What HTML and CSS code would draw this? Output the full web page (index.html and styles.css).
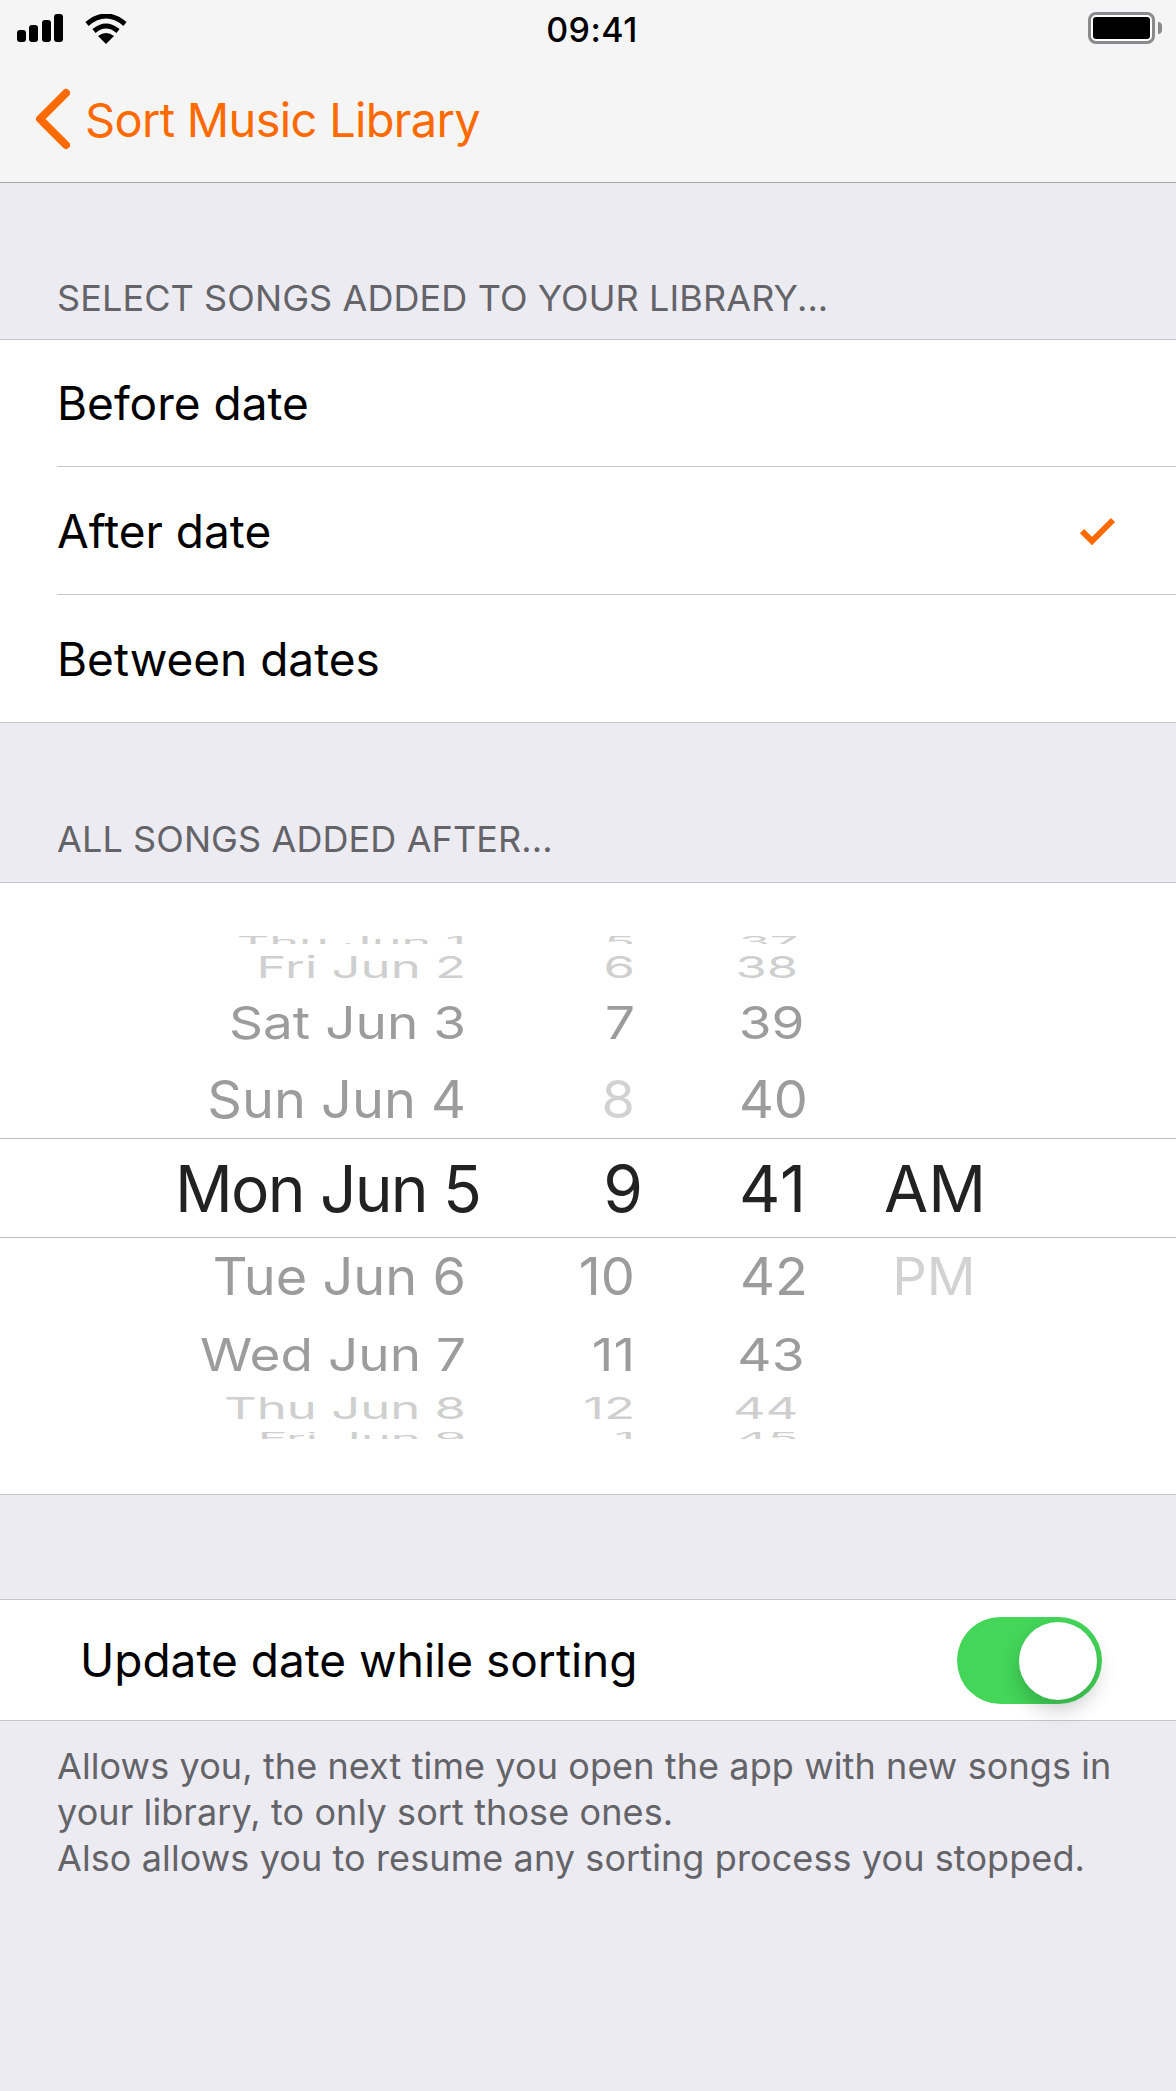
FILE: index.html
```html
<!DOCTYPE html>
<html>
<head>
<title>Sort Music Library</title>
<link rel="stylesheet" href="styles.css">
</head>
<body>
<div class="topbar">
    <div class="status">
        <div class="status-left">
            <svg class="signal" width="46" height="28" viewBox="0 0 46 28">
                <rect x="0" y="16" width="9" height="12" rx="3"/>
                <rect x="12" y="11" width="9" height="17" rx="3"/>
                <rect x="25" y="6" width="9" height="22" rx="3"/>
                <rect x="37" y="0" width="9" height="28" rx="3"/>
            </svg>
            <svg class="wifi" width="42" height="30" viewBox="0 0 42 30">
                <path d="M2 10 Q21 -6 40 10" fill="none" stroke="#000" stroke-width="5"/>
                <path d="M9 17 Q21 7 33 17" fill="none" stroke="#000" stroke-width="5"/>
                <path d="M13 22 Q21 16 29 22 L21 30 Z"/>
            </svg>
        </div>
        <div class="clock">09:41</div>
        <div class="battery">
            <div class="battery-body"><div class="battery-fill"></div></div>
            <div class="battery-tip"></div>
        </div>
    </div>
    <div class="nav">
        <svg class="back" width="38" height="62" viewBox="0 0 38 62">
            <path d="M34 5 L8 31 L34 57" fill="none" stroke="#ff6a00" stroke-width="8" stroke-linecap="round" stroke-linejoin="round"/>
        </svg>
        <span class="nav-title">Sort Music Library</span>
    </div>
</div>

<div class="section-head first">SELECT SONGS ADDED TO YOUR LIBRARY...</div>
<div class="list">
    <div class="row"><span>Before date</span></div>
    <div class="row"><span>After date</span>
        <svg class="check" width="36" height="28" viewBox="0 0 36 28">
            <path d="M2 14 L12 24 L33 3" fill="none" stroke="#ff6a00" stroke-width="6"/>
        </svg>
    </div>
    <div class="row"><span>Between dates</span></div>
</div>

<div class="section-head">ALL SONGS ADDED AFTER...</div>
<div class="picker">
    <div class="wheel">
        <div class="line clip-top far"><span class="d">Thu Jun 1</span><span class="h">5</span><span class="m">37</span><span class="p"></span></div>
        <div class="line r-fri far"><span class="d">Fri Jun 2</span><span class="h">6</span><span class="m">38</span><span class="p"></span></div>
        <div class="line r-sat"><span class="d">Sat Jun 3</span><span class="h">7</span><span class="m">39</span><span class="p"></span></div>
        <div class="line r-sun"><span class="d">Sun Jun 4</span><span class="h pale">8</span><span class="m">40</span><span class="p"></span></div>
        <div class="line current"><span class="d">Mon Jun 5</span><span class="h">9</span><span class="m">41</span><span class="p">AM</span></div>
        <div class="line r-tue"><span class="d">Tue Jun 6</span><span class="h">10</span><span class="m">42</span><span class="p pale">PM</span></div>
        <div class="line r-wed"><span class="d">Wed Jun 7</span><span class="h">11</span><span class="m">43</span><span class="p"></span></div>
        <div class="line r-thu far"><span class="d">Thu Jun 8</span><span class="h">12</span><span class="m">44</span><span class="p"></span></div>
        <div class="line clip-bottom far"><span class="d">Fri Jun 9</span><span class="h">1</span><span class="m">45</span><span class="p"></span></div>
    </div>
</div>

<div class="list switch-list">
    <div class="row switch-row"><span>Update date while sorting</span>
        <div class="switch"><div class="knob"></div></div>
    </div>
</div>
<div class="footnote">
    Allows you, the next time you open the app with new songs in<br>
    your library, to only sort those ones.<br>
    Also allows you to resume any sorting process you stopped.
</div>
</body>
</html>
```

FILE: styles.css
```css
* {
    box-sizing: border-box;
}

body {
    margin: 0;
    width: 1176px;
    height: 2091px;
    overflow: hidden;
    background-color: #ebebf1;
    font-family: Inter, "Liberation Sans", sans-serif;
    color: #000;
}

.topbar {
    height: 183px;
    background-color: #f5f5f6;
    border-bottom: 1px solid #a5a5a9;
}

.status {
    height: 56px;
    padding: 14px 14px 0 17px;
    display: flex;
    justify-content: space-between;
}

.status-left {
    display: flex;
    gap: 22px;
    align-items: flex-start;
}

.clock {
    font-size: 34px;
    font-weight: 500;
    line-height: 32px;
    letter-spacing: 0.5px;
    margin-right: 31px;
}

.battery {
    display: flex;
    align-items: center;
    height: 32px;
    margin-top: -2px;
}

.battery-body {
    width: 67px;
    height: 32px;
    border: 3px solid #8a8a8c;
    border-radius: 8px;
    padding: 2px;
    background-color: #fff;
}

.battery-fill {
    height: 100%;
    background-color: #000;
    border-radius: 3px;
}

.battery-tip {
    width: 4px;
    height: 12px;
    background-color: #8a8a8c;
    border-radius: 0 4px 4px 0;
    margin-left: 3px;
}

.signal, .wifi {
    display: block;
}

.nav {
    display: flex;
    align-items: center;
    height: 64px;
    margin-top: 31px;
    padding-left: 32px;
}

.nav-title {
    color: #ff6a00;
    font-size: 47px;
    letter-spacing: -0.7px;
    margin-left: 15px;
}

.section-head {
    height: 159px;
    padding: 0 57px 23px;
    display: flex;
    align-items: flex-end;
    font-size: 36px;
    line-height: 40px;
    letter-spacing: 0.1px;
    color: #636368;
}

.section-head.first {
    height: 156px;
    padding-bottom: 21px;
}

.list {
    background-color: #fff;
    border-top: 1px solid #c6c6ca;
    border-bottom: 1px solid #c6c6ca;
    padding-left: 57px;
}

.row {
    height: 128px;
    display: flex;
    align-items: center;
    justify-content: space-between;
    padding-right: 60px;
    border-bottom: 1px solid #c6c6ca;
    font-size: 46px;
}

.row:first-child {
    height: 127px;
}

.row:last-child {
    border-bottom: none;
    height: 127px;
}

.picker {
    height: 613px;
    background-color: #fff;
    border-top: 1px solid #c6c6ca;
    border-bottom: 1px solid #c6c6ca;
    padding-top: 53px;
}

/* wheel rows: each one is squeezed and widened a bit more away from the middle */
.line {
    display: grid;
    grid-template-columns: 466px 169px 173px 252px;
    align-items: center;
    color: #9c9c9c;
    font-size: 42px;
    overflow: hidden;
}

.line span {
    display: block;
    white-space: nowrap;
    transform-origin: right center;
}

.line .d, .line .h, .line .m {
    text-align: right;
}

.line .p {
    text-align: center;
    transform-origin: center;
}

.line.far {
    color: #cfcfcf;
}

.line .pale {
    color: #d2d2d2;
}

.clip-top {
    height: 8px;
    line-height: 20px;
}

.clip-top span {
    transform: scale(1.2, 0.35) translateY(-12px);
}

.clip-top .m, .clip-bottom .m {
    padding-right: 8px;
}

.r-fri {
    height: 46px;
    line-height: 46px;
}

.r-fri span, .r-thu span {
    transform: scale(1.21, 0.72);
}

.r-fri .m, .r-thu .m {
    padding-right: 8px;
}

.r-sat, .r-wed {
    font-size: 45px;
    line-height: 60px;
}

.r-sat span, .r-wed span {
    transform: scaleX(1.18);
}

.r-sat .m, .r-wed .m {
    padding-right: 3px;
}

.r-sat {
    height: 66px;
}

.r-wed {
    height: 76px;
    padding-top: 2px;
}

.r-sun, .r-tue {
    font-size: 52px;
    line-height: 60px;
}

.r-sun span, .r-tue span {
    transform: scaleX(1.04);
}

.r-sun {
    height: 82px;
    padding-top: 5px;
}

.r-tue {
    height: 78px;
}

.current {
    height: 100px;
    border-top: 1px solid #bcbcbc;
    border-bottom: 1px solid #bcbcbc;
    font-size: 64px;
    color: #222;
    grid-template-columns: 480px 163px 164px 256px;
}

.current .d {
    letter-spacing: -1.8px;
}

.current .m {
    letter-spacing: 1px;
}

.r-thu {
    height: 32px;
    line-height: 32px;
}

.clip-bottom {
    height: 15px;
    line-height: 20px;
    align-items: start;
}

.clip-bottom span {
    transform: scale(1.2, 0.35) translateY(12px);
}

.switch-list {
    margin-top: 104px;
    padding-left: 0;
}

.switch-row {
    height: 120px;
    padding: 0 74px 0 80px;
    border-bottom: none;
}

.switch-row:last-child {
    height: 120px;
}

.switch {
    width: 145px;
    height: 87px;
    border-radius: 44px;
    background-color: #43d659;
    position: relative;
}

.knob {
    position: absolute;
    top: 5px;
    right: 5px;
    width: 78px;
    height: 78px;
    border-radius: 50%;
    background-color: #fff;
    box-shadow: 0 10px 20px rgba(0,0,0,0.2);
}

.footnote {
    padding: 22px 57px 0;
    font-size: 36px;
    line-height: 46px;
    letter-spacing: 0.1px;
    color: #636368;
}
```
